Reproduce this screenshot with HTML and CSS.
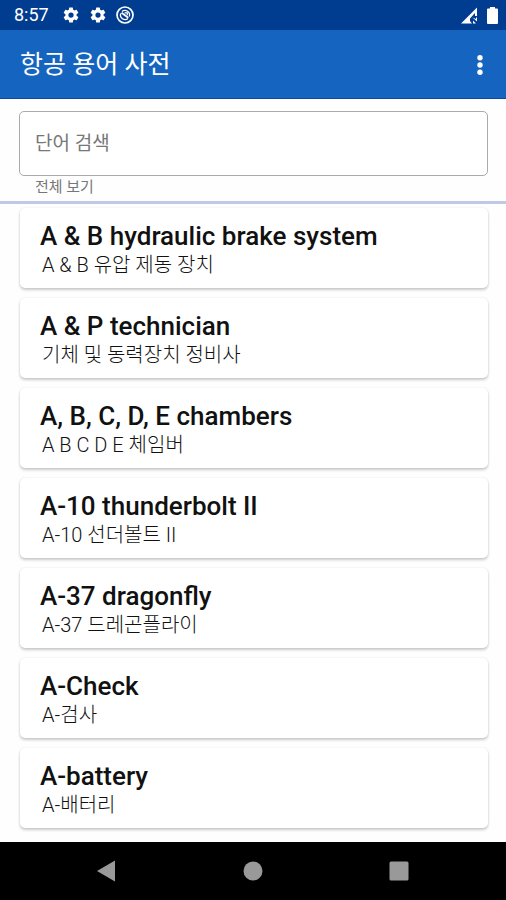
FILE: index.html
```html
<!DOCTYPE html>
<html lang="ko">
<head>
  <meta charset="UTF-8" />
  <meta name="viewport" content="width=device-width, initial-scale=1.0"/>
  <title>항공 용어 사전</title>
  <link rel="stylesheet" href="styles.css">
</head>
<body>
  <div class="status-bar">
    <span class="clock">8:57</span>
    <svg class="status-icon" viewBox="0 0 24 24"><path fill="#fff" fill-rule="evenodd" d="M19.4 13a7.500 7.500 0 0 0 0-2l2.100-1.650a.5.5 0 0 0 .12-.64l-2-3.460a.5.5 0 0 0-.61-.22l-2.490 1a7.300 7.300 0 0 0-1.690-.98l-.38-2.650A.49.49 0 0 0 14 2h-4a.49.49 0 0 0-.49.42l-.38 2.650c-.61.25-1.170.59-1.690.98l-2.490-1a.49.49 0 0 0-.61.22l-2 3.460a.49.49 0 0 0 .12.64L4.600 11a7.900 7.900 0 0 0 0 2l-2.110 1.650a.5.5 0 0 0-.12.64l2 3.460c.12.22.39.3.61.22l2.490-1c.52.4 1.080.73 1.690.98l.38 2.650c.03.24.24.4.49.4h4c.25 0 .46-.18.49-.42l.38-2.650c.61-.25 1.170-.59 1.690-.98l2.490 1c.23.09.49 0 .61-.22l2-3.460a.5.5 0 0 0-.12-.64zM12 15.500a3.500 3.500 0 1 1 0-7 3.500 3.500 0 0 1 0 7z"/></svg>
    <svg class="status-icon" viewBox="0 0 24 24"><path fill="#fff" fill-rule="evenodd" d="M19.4 13a7.500 7.500 0 0 0 0-2l2.100-1.650a.5.5 0 0 0 .12-.64l-2-3.460a.5.5 0 0 0-.61-.22l-2.490 1a7.300 7.300 0 0 0-1.690-.98l-.38-2.650A.49.49 0 0 0 14 2h-4a.49.49 0 0 0-.49.42l-.38 2.650c-.61.25-1.170.59-1.690.98l-2.490-1a.49.49 0 0 0-.61.22l-2 3.460a.49.49 0 0 0 .12.64L4.600 11a7.900 7.900 0 0 0 0 2l-2.110 1.650a.5.5 0 0 0-.12.64l2 3.460c.12.22.39.3.61.22l2.490-1c.52.4 1.080.73 1.690.98l.38 2.650c.03.24.24.4.49.4h4c.25 0 .46-.18.49-.42l.38-2.650c.61-.25 1.170-.59 1.690-.98l2.490 1c.23.09.49 0 .61-.22l2-3.460a.5.5 0 0 0-.12-.64zM12 15.500a3.500 3.500 0 1 1 0-7 3.500 3.500 0 0 1 0 7z"/></svg>
    <svg class="status-icon" viewBox="0 0 18 18" fill="none" stroke="#fff"><circle cx="9" cy="9" r="8" stroke-width="1.700"/><path stroke-width="1.300" d="M6 5.500A4.600 4.600 0 0 1 13.300 10.500M4.700 7.500A4.600 4.600 0 0 0 12 12.500"/><path stroke-width="1.800" d="M5.500 6.800l6.800 5"/><path stroke-width="1.200" d="M8.500 6.800h2.800v2.400"/></svg>
    <span class="spacer"></span>
    <svg class="signal" viewBox="0 0 17 17"><path fill="#fff" fill-rule="evenodd" d="M0 16.500L16 .5v8.500h-2V6L9 11.500v2.500l2 2.500zM11.500 10.500l4.500 4v-4h-1v1.500zM12 16.500v-3l3 3z"/></svg>
    <svg class="battery" viewBox="0 0 11 17"><path fill="#fff" d="M3 0h5v1.500h2a1 1 0 0 1 1 1V16a1 1 0 0 1-1 1H1a1 1 0 0 1-1-1V2.500a1 1 0 0 1 1-1h2z"/></svg>
  </div>

  <header class="app-bar">
    <h1>항공 용어 사전</h1>
    <button type="button" class="menu-btn" aria-label="메뉴">
      <svg viewBox="0 0 6 20" fill="#fff"><circle cx="3" cy="2.700" r="2.700"/><circle cx="3" cy="10" r="2.700"/><circle cx="3" cy="17.300" r="2.700"/></svg>
    </button>
  </header>

  <div class="search">
    <input type="text" id="word" placeholder="단어 검색" />
    <label for="word">전체 보기</label>
  </div>

  <main class="word-list">
    <div class="card">
      <h2>A &amp; B hydraulic brake system</h2>
      <p>A &amp; B 유압 제동 장치</p>
    </div>
    <div class="card">
      <h2>A &amp; P technician</h2>
      <p>기체 및 동력장치 정비사</p>
    </div>
    <div class="card">
      <h2>A, B, C, D, E chambers</h2>
      <p>A B C D E 체임버</p>
    </div>
    <div class="card">
      <h2>A-10 thunderbolt II</h2>
      <p>A-10 선더볼트 II</p>
    </div>
    <div class="card">
      <h2>A-37 dragonfly</h2>
      <p>A-37 드레곤플라이</p>
    </div>
    <div class="card">
      <h2>A-Check</h2>
      <p>A-검사</p>
    </div>
    <div class="card">
      <h2>A-battery</h2>
      <p>A-배터리</p>
    </div>
  </main>

  <nav class="nav-bar">
    <button type="button" aria-label="뒤로"><svg viewBox="0 0 22 22"><path fill="#999" d="M1 11L19 .5v21z"/></svg></button>
    <button type="button" aria-label="홈"><svg viewBox="0 0 22 22"><circle cx="11" cy="11" r="9.500" fill="#999"/></svg></button>
    <button type="button" aria-label="최근 앱"><svg viewBox="0 0 22 22"><rect x="1.500" y="1.500" width="19" height="19" rx="1.500" fill="#999"/></svg></button>
  </nav>
</body>
</html>
```
FILE: styles.css
```css
* {
  box-sizing: border-box;
}

body {
  margin: 0;
  min-height: 100vh;
  display: flex;
  flex-direction: column;
  background: #fefefe;
  color: #111;
  font-family: Roboto, 'Noto Sans CJK KR', sans-serif;
}

h1, h2, p {
  margin: 0;
}

button {
  display: flex;
  align-items: center;
  justify-content: center;
  padding: 0;
  border: none;
  background: none;
  cursor: pointer;
}

/* status bar */
.status-bar {
  display: flex;
  align-items: center;
  gap: 9px;
  height: 30px;
  padding: 0 8px 0 14px;
  background: #003c8f;
  color: #fff;
}

.clock {
  font-size: 18px;
  line-height: 20px;
  margin-right: 4px;
}

.status-icon {
  width: 18px;
  height: 18px;
}

.spacer {
  flex: 1;
}

.signal {
  width: 17px;
  height: 17px;
}

.battery {
  width: 11px;
  height: 17px;
}

/* app bar */
.app-bar {
  display: flex;
  align-items: center;
  justify-content: space-between;
  height: 69px;
  padding: 2px 14px 0 20px;
  background: #1565c0;
  border-bottom: 1px solid #0d47a1;
  color: #fff;
}

.app-bar h1 {
  font-size: 25px;
  line-height: 32px;
  font-weight: 400;
}

.menu-btn {
  width: 24px;
  height: 40px;
}

.menu-btn svg {
  width: 6px;
  height: 20px;
}

/* search */
.search {
  display: flex;
  flex-direction: column;
  padding: 12px 18px 4px 19px;
  border-bottom: 3px solid #c0c8e4;
}

.search input {
  width: 100%;
  height: 65px;
  padding: 0 15px;
  border: 1px solid #aaa;
  border-radius: 5px;
  background: #fff;
  font-family: inherit;
  font-size: 19px;
}

.search input::placeholder {
  color: #777;
  opacity: 1;
}

.search label {
  padding: 1px 16px 0;
  font-size: 15px;
  line-height: 20px;
  color: #777;
}

/* word list */
.word-list {
  flex: 1;
  display: flex;
  flex-direction: column;
  gap: 10px;
  padding: 4px 18px 12px 20px;
}

.card {
  padding: 13px 20px 9px;
  border-radius: 5px;
  background: #fff;
  box-shadow: 0 2px 3px rgba(0,0,0,0.2), 0 0 2px rgba(0,0,0,0.1);
}

.card h2 {
  font-size: 26px;
  line-height: 30px;
  font-weight: 500;
}

.card p {
  padding-left: 2px;
  font-size: 20px;
  line-height: 28px;
  font-weight: 300;
}

/* android navigation */
.nav-bar {
  display: flex;
  justify-content: center;
  gap: 124px;
  height: 58px;
  background: #000;
}

.nav-bar svg {
  width: 22px;
  height: 22px;
}
```
